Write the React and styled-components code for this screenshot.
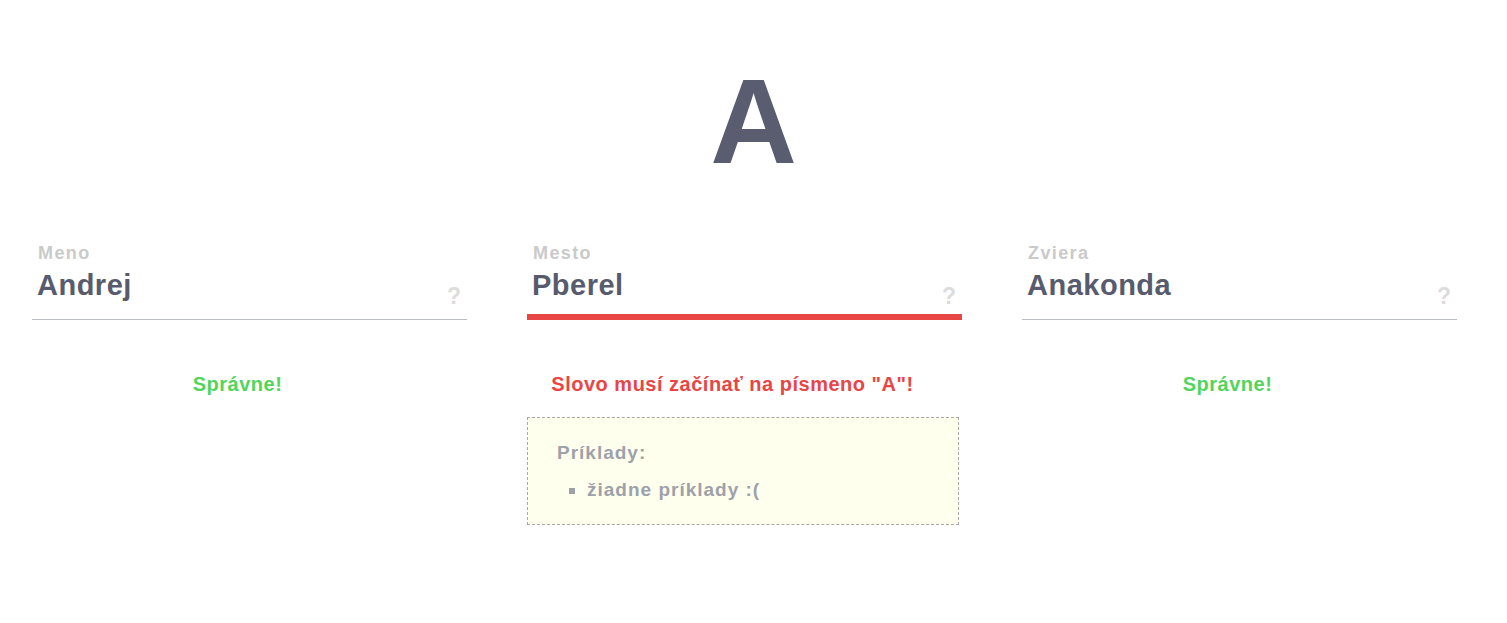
import React from 'react';
import styled, {createGlobalStyle, css} from 'styled-components';

const GlobalStyle = createGlobalStyle`
  html, body {
    margin: 0;
    padding: 0;
    background: #ffffff;
  }
  body {
    font-family: "Liberation Sans", Arial, Helvetica, sans-serif;
    font-weight: bold;
  }
`;

const Page = styled.div`
  padding-top: 61px;
`;

const Letter = styled.div`
  text-align: center;
  font-size: 120px;
  line-height: 1;
  color: #595d6f;
`;

const Fields = styled.div`
  display: grid;
  grid-template-columns: repeat(3, 435px);
  column-gap: 60px;
  padding-left: 32px;
  margin-top: 61px;
  align-items: start;
`;

const Column = styled.div`
  display: flex;
  flex-direction: column;
`;

const InputBox = styled.div`
  position: relative;
  display: flex;
  align-items: flex-end;
  height: 78px;
  padding: 1px 6px 0 5px;
  box-sizing: border-box;
  &::after {
    content: "";
    position: absolute;
    left: 0;
    right: 0;
    bottom: 0;
    height: ${p => (p.$error ? '6px' : '1px')};
    background: ${p => (p.$error ? '#e84545' : '#babec4')};
  }
`;

const InputText = styled.div`
  flex: 1;
  align-self: flex-start;
`;

const Label = styled.div`
  font-size: 18px;
  line-height: 20px;
  letter-spacing: 1.4px;
  color: #cacaca;
  padding-left: 1px;
`;

const Value = styled.div`
  margin-top: 6px;
  font-size: 29px;
  line-height: 32px;
  letter-spacing: 0.5px;
  color: #575b6d;
`;

const Hint = styled.div`
  font-size: 23px;
  line-height: 1;
  color: #dcdcdc;
  margin-bottom: 12px;
  cursor: pointer;
`;

const Message = styled.div`
  margin-top: 52px;
  padding-right: 24px;
  text-align: center;
  font-size: 20px;
  line-height: 24px;
  letter-spacing: 0.5px;
  ${p => p.$error ? css`color: #e94545;` : css`color: #52d55b;`}
`;

const Examples = styled.div`
  margin-top: 21px;
  width: 432px;
  box-sizing: border-box;
  padding: 24px 20px 22px 29px;
  border: 1px dashed #a8a8a8;
  background: #ffffee;
  color: #9da1aa;
`;

const ExamplesTitle = styled.div`
  font-size: 19px;
  line-height: 22px;
  letter-spacing: 1px;
`;

const ExampleList = styled.ul`
  margin: 14px 0 0;
  padding-left: 30px;
  list-style: square;
  font-size: 19px;
  line-height: 24px;
  letter-spacing: 1px;
`;

const fields = [
  {label: 'Meno', value: 'Andrej', ok: true, message: 'Správne!'},
  {label: 'Mesto', value: 'Pberel', ok: false, message: 'Slovo musí začínať na písmeno "A"!', examples: []},
  {label: 'Zviera', value: 'Anakonda', ok: true, message: 'Správne!'},
];

function Field({label, value, ok, message, examples}) {
  return (
    <Column>
      <InputBox $error={!ok}>
        <InputText>
          <Label>{label}</Label>
          <Value>{value}</Value>
        </InputText>
        <Hint>?</Hint>
      </InputBox>
      <Message $error={!ok}>{message}</Message>
      {examples && (
        <Examples>
          <ExamplesTitle>Príklady:</ExamplesTitle>
          <ExampleList>
            {examples.length ? examples.map(e => <li key={e}>{e}</li>) : <li>žiadne príklady :(</li>}
          </ExampleList>
        </Examples>
      )}
    </Column>
  );
}

export default function App() {
  return (
    <>
      <GlobalStyle />
      <Page>
        <Letter>A</Letter>
        <Fields>
          {fields.map(f => <Field key={f.label} {...f} />)}
        </Fields>
      </Page>
    </>
  );
}
